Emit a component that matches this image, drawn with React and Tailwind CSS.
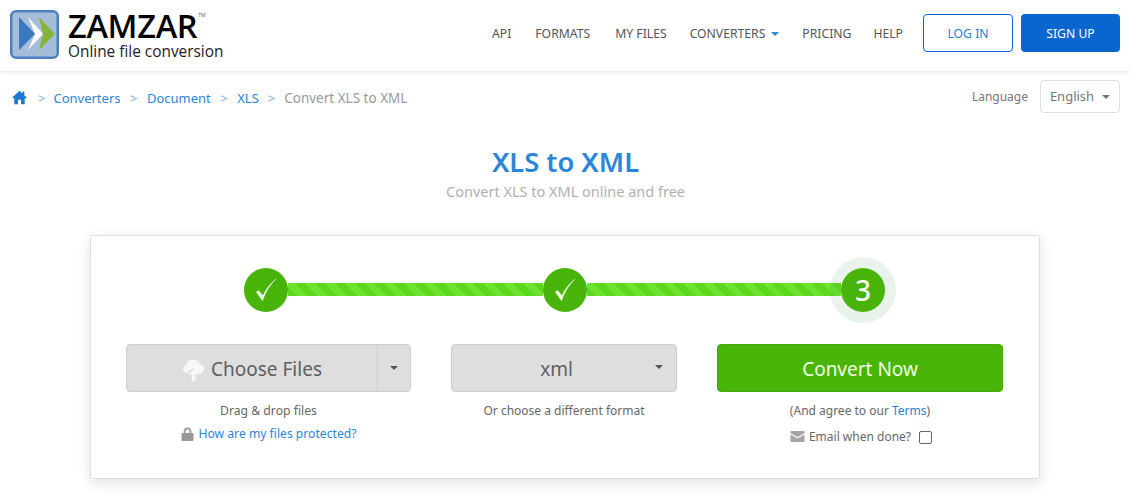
import React from "react";

function Logo() {
  return (
    <svg width="49" height="49" viewBox="0 0 49 49" className="shrink-0">
      <rect x="1.25" y="1.25" width="46.5" height="46.5" rx="5" fill="#a5bdd8" stroke="#4a80c0" strokeWidth="2.5" />
      <polygon points="9,7 25,24 9,40" fill="#3a78bf" />
      <polygon points="18,7 33,24 18,40 25,24" fill="#ffffff" />
      <polygon points="29,7 45,24 29,40 33,24" fill="#87b33a" />
    </svg>
  );
}

function Caret({ className }) {
  return <span className={"inline-block w-0 h-0 border-x-[4px] border-x-transparent border-t-[4px] " + className} />;
}

function Check() {
  return (
    <svg width="22" height="24" viewBox="0 0 22 24">
      <path d="M1.500 14 L7.500 22.500 C10 15 14 7.500 20.500 1.500 C15 6 11 11.500 8 18 L3.500 12.700 Z" fill="#f4ffe8" stroke="#f4ffe8" strokeWidth="0.8" strokeLinejoin="round" />
    </svg>
  );
}

function StepCircle({ children, ring }) {
  return (
    <div className={"relative z-10 w-11 h-11 shrink-0 rounded-full bg-[#48b40a] flex items-center justify-center text-white text-[28px] font-medium leading-none " + (ring ? "shadow-[0_0_0_11px_rgba(50,140,60,0.1)]" : "")}>
      {children}
    </div>
  );
}

function Bar() {
  return <div className="flex-1 h-[13px] mb-[2px] bg-[repeating-linear-gradient(45deg,#5cd81c_0px,#5cd81c_7px,#6de22f_7px,#6de22f_14px)]" />;
}

export default function App() {
  return (
    <div className="w-[1131px] h-[495px] overflow-hidden bg-white text-[#6b6b6b] font-['Noto_Sans','Open_Sans',sans-serif]">
      <header className="h-[71px] flex items-center justify-between pl-[10px] pr-[11px] pb-[5px] shadow-[0_1px_4px_rgba(0,0,0,0.1)]">
        <div className="flex items-start gap-[9px] h-[49px] mt-[2px]">
          <Logo />
          <div className="flex flex-col text-black pt-[1px]">
            <div className="flex items-start h-[30px]">
              <span className="text-[32.500px] leading-[30px] font-semibold tracking-[-0.3px] font-['Open_Sans',sans-serif]">ZAMZAR</span>
              <span className="text-[5px] leading-[10px] ml-[1px] mt-[-1px] text-[#666]">TM</span>
            </div>
            <span className="text-[15.400px] leading-[20px] mt-[1px] text-[#222] font-['Open_Sans',sans-serif]">Online file conversion</span>
          </div>
        </div>
        <nav className="flex items-center text-[12.200px] text-[#555]">
          <a className="mr-[24px] pt-[2px]">API</a>
          <a className="mr-[25px] pt-[2px]">FORMATS</a>
          <a className="mr-[23px] pt-[2px]">MY FILES</a>
          <a className="mr-[23px] pt-[2px] flex items-center gap-[6px]">CONVERTERS <Caret className="border-t-[#2b85d8]" /></a>
          <a className="mr-[22px] pt-[2px]">PRICING</a>
          <a className="mr-[20px] pt-[2px]">HELP</a>
          <a className="w-[90px] h-[38px] flex items-center justify-center rounded-[4px] border border-[#0a66cf] text-[#2b7cd3] mr-[8px] pt-[2px]">LOG IN</a>
          <a className="w-[99px] h-[38px] flex items-center justify-center rounded-[4px] bg-[#0a66cf] text-white pt-[2px]">SIGN UP</a>
        </nav>
      </header>

      <div className="h-[33px] mt-[9px] flex items-center justify-between pl-[12px] pr-[11px] text-[13px]">
        <div className="flex items-center text-[#2b85d8] mt-[4px]">
          <svg width="15" height="15" viewBox="0 0 16 16" fill="#1f78d1" className="mr-[11px] mt-[-3px]">
            <path d="M8 0.8 0.3 8l1 1.1L2.4 8.2V15.2h4V10.5h3.2v4.700h4V8.2l1.100.9 1-1.100-2.600-2.400V1.600h-2v2.200z" />
          </svg>
          <span className="mr-[8px] text-[#7aa9d8]">&gt;</span>
          <a>Converters</a>
          <span className="mx-[9.500px] text-[#7aa9d8]">&gt;</span>
          <a>Document</a>
          <span className="mx-[9.500px] text-[#7aa9d8]">&gt;</span>
          <a>XLS</a>
          <span className="mx-[9px] text-[#7aa9d8]">&gt;</span>
          <span className="text-[#999] text-[13.500px]">Convert XLS to XML</span>
        </div>
        <div className="flex items-center gap-[12px]">
          <span className="text-[12px] text-[#777]">Language</span>
          <div className="w-[80px] h-[33px] rounded-[4px] border border-[#e0e0e0] flex items-center justify-center gap-[8px] text-[#777] pt-[1px]">
            English <Caret className="border-t-[#777]" />
          </div>
        </div>
      </div>

      <h1 className="mt-[31px] text-center text-[27.300px] leading-[36px] font-semibold text-[#2b85d8]">XLS to XML</h1>
      <p className="text-center text-[14.500px] leading-[20px] text-[#b0b0b0] mt-[1px]">Convert XLS to XML online and free</p>

      <section className="mt-[34px] mx-[90px] w-[950px] h-[244px] rounded-[3px] border border-[#ddd] shadow-[0_4px_14px_rgba(0,0,0,0.12)] px-[35px] pt-[32px]">
        <div className="flex items-center pl-[118px] pr-[119px] h-[44px]">
          <StepCircle><Check /></StepCircle>
          <Bar />
          <StepCircle><Check /></StepCircle>
          <Bar />
          <StepCircle ring>3</StepCircle>
        </div>

        <div className="mt-[32px] grid grid-cols-[285px_226px_286px] gap-x-[40px]">
          <div className="flex flex-col items-center">
            <div className="w-full h-[48px] flex rounded-[4px] border border-[#cfcfcf] bg-[#dedede] text-[#5f5f5f]">
              <div className="flex-1 flex items-center justify-center gap-[6px] text-[19px] pt-[2px]">
                <svg width="23" height="24" viewBox="0 0 23 24" fill="#f7f7f7" className="mt-[2px]">
                  <path d="M6 15.500C3 15.500 1 13.500 1 11c0-2.200 1.600-3.900 3.600-4.200C5.200 3.600 8 1.500 11.500 1.500c3.500 0 6.300 2.100 6.900 5.300 2 .3 3.600 2 3.600 4.200 0 2.500-2 4.500-5 4.500h-1.300l-5.200-5.500-5.200 5.500z" />
                  <path d="M11.500 11.500l-5 5.300h3.300v6.200h3.400v-6.200h3.300z" />
                </svg>
                Choose Files
              </div>
              <div className="w-[33px] border-l border-[#cfcfcf] flex items-center justify-center">
                <Caret className="border-t-[#555]" />
              </div>
            </div>
            <p className="mt-[10px] text-[12.200px] leading-[18px] text-[#666]">Drag &amp; drop files</p>
            <p className="mt-[5px] text-[12.150px] leading-[18px] text-[#2b85d8] flex items-center gap-[5px]">
              <svg width="13" height="14" viewBox="0 0 13 14" fill="#999">
                <path d="M6.500 0.500A3.800 3.800 0 0 0 2.700 4.300V6H1.500A1 1 0 0 0 .5 7v6a1 1 0 0 0 1 1h10a1 1 0 0 0 1-1V7a1 1 0 0 0-1-1h-1.200V4.300A3.800 3.800 0 0 0 6.500.5zM4.500 6V4.300a2 2 0 0 1 4 0V6z" />
              </svg>
              How are my files protected?
            </p>
          </div>

          <div className="flex flex-col items-center">
            <div className="relative w-full h-[48px] flex items-center justify-center rounded-[4px] border border-[#cfcfcf] bg-[#dedede] text-[#5f5f5f] text-[19px] pr-[15px] pt-[2px]">
              xml
              <Caret className="absolute right-[13px] top-[20px] border-t-[#555]" />
            </div>
            <p className="mt-[10px] text-[12px] leading-[18px] text-[#666]">Or choose a different format</p>
          </div>

          <div className="flex flex-col items-center">
            <div className="w-full h-[48px] flex items-center justify-center rounded-[4px] border border-[#46a80c] bg-[#4ab509] text-[#f1ffe0] text-[19px] pt-[2px]">
              Convert Now
            </div>
            <p className="mt-[10px] text-[12px] leading-[18px] text-[#666]">(And agree to our <a className="text-[#2b7cd3]">Terms</a>)</p>
            <div className="mt-[8px] ml-[2px] flex items-center text-[12px] leading-[18px] text-[#666]">
              <svg width="15" height="11" viewBox="0 0 14 11" fill="#a5a5a5" className="mr-[4px] mt-[-2px]">
                <path d="M0 0h14v2.200L7 6 0 2.200z" />
                <path d="M0 3.600 7 7.400l7-3.800V11H0z" />
              </svg>
              Email when done?
              <span className="ml-[8px] w-[13px] h-[13px] rounded-[2px] border border-[#666] bg-white" />
            </div>
          </div>
        </div>
      </section>
    </div>
  );
}
